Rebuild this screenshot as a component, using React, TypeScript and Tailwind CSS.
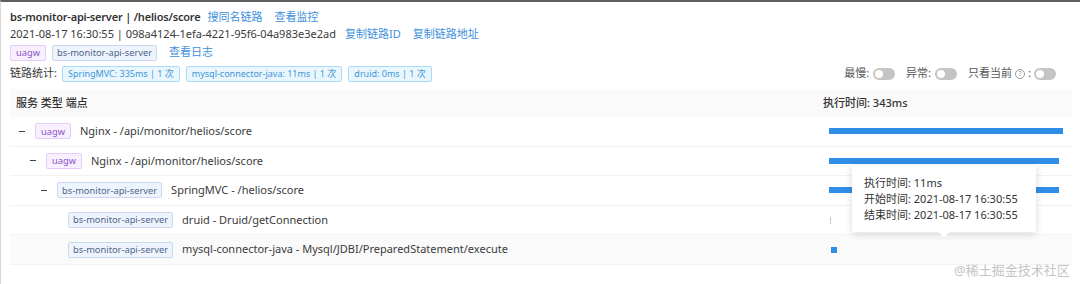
import React from 'react';

// Tag shown in front of each span: service name or type
function Tag({ text, tone }: { text: string; tone: 'purple' | 'blue' | 'cyan' }) {
  const toneClass =
    tone === 'purple'
      ? 'bg-[#f9f0ff] border-[#e3cdf8] text-[#8a55c9] px-[5px] text-[9.3px]'
      : tone === 'blue'
        ? 'bg-[#eef4fd] border-[#c9d9f1] text-[#4f6389] px-[4px] text-[9.3px]'
        : 'bg-[#e9f6fe] border-[#a9dbf8] text-[#3d97d6] px-[5px] text-[9px]';
  return (
    <span className={`inline-flex h-[16px] items-center rounded-[2px] border leading-none whitespace-nowrap ${toneClass}`}>
      {text}
    </span>
  );
}

function Toggle() {
  return (
    <span className="relative inline-block h-[12px] w-[22px] rounded-full bg-[#c4c4c4]">
      <span className="absolute left-[2px] top-[2px] h-[8px] w-[8px] rounded-full bg-white" />
    </span>
  );
}

interface Row {
  depth: number;
  collapse: boolean;
  tag: string;
  tone: 'purple' | 'blue';
  name: string;
  bar: React.ReactNode;
  hover?: boolean;
}

const rows: Row[] = [
  { depth: 0, collapse: true, tag: 'uagw', tone: 'purple', name: 'Nginx - /api/monitor/helios/score', bar: <div className="h-[6px] w-[234px] bg-[#2f8ee5]" /> },
  { depth: 1, collapse: true, tag: 'uagw', tone: 'purple', name: 'Nginx - /api/monitor/helios/score', bar: <div className="h-[6px] w-[230px] bg-[#2f8ee5]" /> },
  { depth: 2, collapse: true, tag: 'bs-monitor-api-server', tone: 'blue', name: 'SpringMVC - /helios/score', bar: <div className="h-[6px] w-[230px] bg-[#2f8ee5]" /> },
  { depth: 3, collapse: false, tag: 'bs-monitor-api-server', tone: 'blue', name: 'druid - Druid/getConnection', bar: <div className="ml-[1px] h-[7px] w-px bg-[#b8c9da]" /> },
  { depth: 3, collapse: false, tag: 'bs-monitor-api-server', tone: 'blue', name: 'mysql-connector-java - Mysql/JDBI/PreparedStatement/execute', bar: <div className="ml-[2px] h-[6px] w-[6px] bg-[#2f8ee5]" />, hover: true },
];

// dash starts 9px in, each level adds 11px; leaf rows skip the dash (16px)
const indent = ['pl-[9px]', 'pl-[20px]', 'pl-[31px]', 'pl-[58px]'];

export default function App() {
  return (
    <div
      className="relative h-[284px] w-[1080px] overflow-hidden border-t-[2px] border-l border-t-[#5e5e5e] border-l-[#d6d6d6] bg-white text-[11px] text-[#3a3a3a]"
      style={{ fontFamily: '"Noto Sans", "Noto Sans CJK SC", sans-serif' }}
    >
      <div className="flex flex-col pl-[9px] pr-[8px] pt-[6px]">
        {/* header info */}
        <div className="flex h-[18px] items-center">
          <span className="font-semibold tracking-[-0.2px] text-[#333]">bs-monitor-api-server | /helios/score</span>
          <span className="ml-[7px] text-[#3e8fdc]">搜同名链路</span>
          <span className="ml-[12px] text-[#3e8fdc]">查看监控</span>
        </div>
        <div className="flex h-[17px] items-center">
          <span>2021-08-17 16:30:55 | 098a4124-1efa-4221-95f6-04a983e3e2ad</span>
          <span className="ml-[9px] text-[#3e8fdc]">复制链路ID</span>
          <span className="ml-[12px] text-[#3e8fdc]">复制链路地址</span>
        </div>
        <div className="flex h-[19px] items-center gap-[6px]">
          <Tag text="uagw" tone="purple" />
          <Tag text="bs-monitor-api-server" tone="blue" />
          <span className="ml-[6px] text-[#3e8fdc]">查看日志</span>
        </div>
        <div className="mt-[1px] flex h-[21px] items-center">
          <span>链路统计:</span>
          <div className="ml-[5px] flex gap-[6px]">
            <Tag text="SpringMVC: 335ms | 1 次" tone="cyan" />
            <Tag text="mysql-connector-java: 11ms | 1 次" tone="cyan" />
            <Tag text="druid: 0ms | 1 次" tone="cyan" />
          </div>
          <div className="ml-auto mr-[16px] flex items-center gap-[11px] text-[#555]">
            <span className="flex items-center gap-[4px]">最慢: <Toggle /></span>
            <span className="flex items-center gap-[4px]">异常: <Toggle /></span>
            <span className="flex items-center gap-[3px]">
              只看当前
              <span className="inline-flex h-[10px] w-[10px] items-center justify-center rounded-full border border-[#9a9a9a] text-[7px] leading-none text-[#9a9a9a]">?</span>
              : <Toggle />
            </span>
          </div>
        </div>

        {/* span table */}
        <div className="mt-[5px] flex flex-col">
          <div className="flex h-[28px] items-center bg-[#fafafa] font-medium text-[#333]">
            <div className="w-[806px] pl-[6px]">服务 类型 端点</div>
            <div className="pl-[7px]">执行时间: 343ms</div>
          </div>
          {rows.map((r, i) => (
            <div
              key={i}
              className={`flex h-[29.6px] items-center border-b border-[#f2f2f2] ${r.hover ? 'bg-[#fafafa]' : 'bg-white'}`}
            >
              <div className={`flex w-[806px] items-center ${indent[r.depth]}`}>
                {r.collapse && <span className="mr-[10px] h-px w-[6px] bg-[#444]" />}
                <Tag text={r.tag} tone={r.tone} />
                <span className="ml-[9px]">{r.name}</span>
              </div>
              <div className="pl-[13px]">{r.bar}</div>
            </div>
          ))}
        </div>
      </div>

      {/* tooltip on hovered span */}
      <div className="absolute left-[851px] top-[163px] flex w-[184px] flex-col gap-[3px] rounded-[2px] bg-white px-[12px] py-[11px] text-[11px] leading-[13px] text-[#333] shadow-[0_2px_8px_rgba(0,0,0,0.15)]">
        <span>执行时间: 11ms</span>
        <span>开始时间: 2021-08-17 16:30:55</span>
        <span>结束时间: 2021-08-17 16:30:55</span>
        <span className="absolute -bottom-[4px] left-[88px] h-[8px] w-[8px] rotate-45 bg-white" />
      </div>

      <div className="absolute left-[953px] top-[259px] text-[13px] text-[#c4c4c4]">@稀土掘金技术社区</div>
    </div>
  );
}
